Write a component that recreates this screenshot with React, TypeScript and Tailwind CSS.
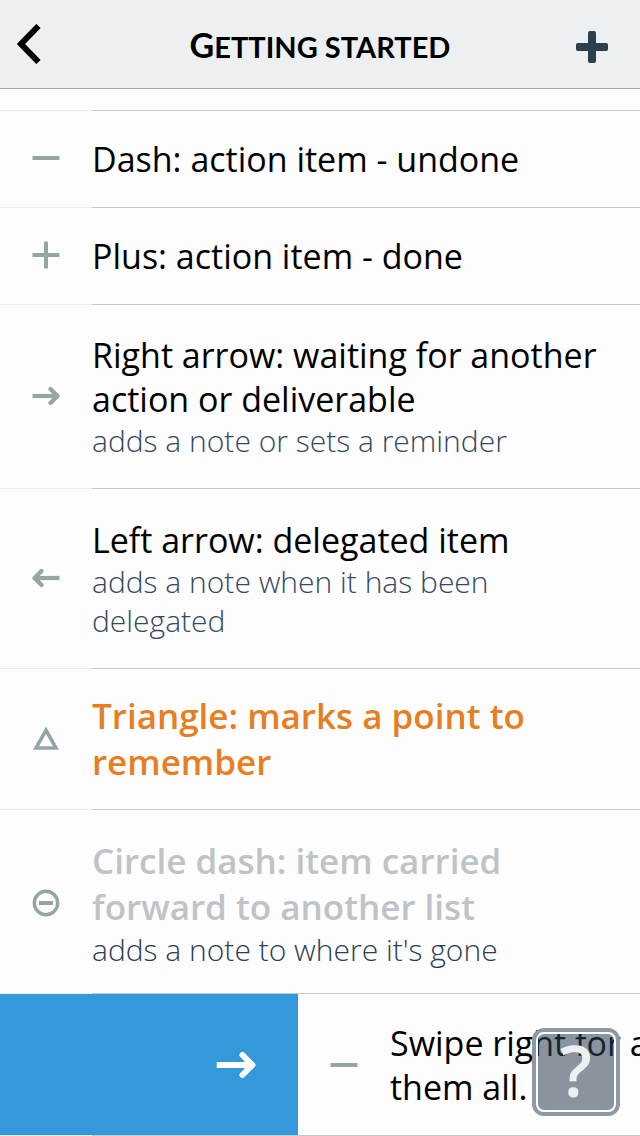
import type { ReactNode } from "react";
import clsx from "clsx";

type Item = {
  id: string;
  icon: ReactNode;
  title: string;
  note?: string;
  pad: string;
  titleClass?: string;
  noteClass?: string;
};

const items: Item[] = [
  { id: "dash", icon: <DashIcon />, title: "Dash: action item - undone", pad: "py-[26px]" },
  { id: "plus", icon: <PlusIcon />, title: "Plus: action item - done", pad: "py-[26px]" },
  {
    id: "right",
    icon: <ArrowIcon className="h-7 w-7" />,
    title: "Right arrow: waiting for another action or deliverable",
    note: "adds a note or sets a reminder",
    pad: "py-7",
  },
  {
    id: "left",
    icon: <ArrowIcon className="h-7 w-7 rotate-180" />,
    title: "Left arrow: delegated item",
    note: "adds a note when it has been delegated",
    pad: "pt-[29px] pb-7",
  },
  {
    id: "triangle",
    icon: <TriangleIcon />,
    title: "Triangle: marks a point to remember",
    pad: "py-6",
    titleClass: "text-[35px] font-semibold leading-[46px] text-[#e67e22]",
  },
  {
    id: "circle",
    icon: <CircleDashIcon />,
    title: "Circle dash: item carried forward to another list",
    note: "adds a note to where it's gone",
    pad: "pt-7 pb-6",
    titleClass: "text-[35px] font-semibold leading-[46px] text-[#bdc3c7]",
    noteClass: "text-[#2c3e50]",
  },
];

export default function App() {
  return (
    <div className="relative flex h-screen flex-col overflow-hidden bg-[#fdfdfd] font-['Open_Sans','Noto_Sans',sans-serif]">
      <header className="grid h-[89px] shrink-0 grid-cols-[92px_1fr_92px] items-center border-b border-[#a3a7a7] bg-[#ecf0f1]">
        <button type="button" aria-label="Back" className="flex h-full items-center pl-4">
          <svg viewBox="0 0 26 40" className="h-10 w-[26px]" fill="none" stroke="#000" strokeWidth="6">
            <path d="M22.5 2 L5 20 L22.5 38" />
          </svg>
        </button>
        <h1 className="text-center font-['Lato',sans-serif] text-[29px] font-bold uppercase first-letter:text-[34px]">
          Getting started
        </h1>
        <button type="button" aria-label="Add item" className="flex h-full items-center justify-end pt-1.5 pr-8">
          <svg viewBox="0 0 32 32" className="h-8 w-8" fill="#2c3e50">
            <rect x="0" y="12" width="32" height="8" rx="2" />
            <rect x="12" y="0" width="8" height="32" rx="2" />
          </svg>
        </button>
      </header>

      <main className="pt-[21px]">
        <Separator />
        <ul>
          {items.map((item) => (
            <li key={item.id}>
              <Row item={item} />
              <Separator />
            </li>
          ))}
          <li>
            {/* row pulled to the right, showing the "waiting" action */}
            <div className="flex overflow-hidden">
              <div className="flex w-[298px] shrink-0 items-center justify-end bg-[#3498db] pr-[42px] text-white">
                <ArrowIcon className="h-10 w-10" />
              </div>
              <div className="flex w-full shrink-0 items-center pt-[27px] pb-[26px]">
                <div className="flex w-[92px] shrink-0 justify-center text-[#95a5a6]">
                  <DashIcon />
                </div>
                <p className="text-[34px] leading-[44px] font-medium">
                  Swipe right for a
                  <br />
                  them all.
                </p>
              </div>
            </div>
            <Separator />
          </li>
        </ul>
      </main>

      <button
        type="button"
        aria-label="Help"
        className="absolute right-5 bottom-5 h-[88px] w-[88px] rounded-xl border-4 border-[#8f979f] bg-[#2c3e50]/55 bg-clip-padding"
      >
        <span className="flex h-full w-full items-center justify-center rounded-lg border-2 border-white pb-1 text-[70px] leading-none font-semibold text-[#ecf0f1]">
          ?
        </span>
      </button>
    </div>
  );
}

function Row({ item }: { item: Item }) {
  return (
    <div className={clsx("flex items-center", item.pad)}>
      <div className="flex w-[92px] shrink-0 justify-center pb-0.5 text-[#95a5a6]">{item.icon}</div>
      <div className="flex-1 pr-8">
        <h2 className={item.titleClass ?? "text-[34px] leading-[44px] font-medium text-black"}>{item.title}</h2>
        {item.note && (
          <p className={clsx("text-[30px] leading-[39px] font-light", item.noteClass ?? "text-[#34495e]")}>{item.note}</p>
        )}
      </div>
    </div>
  );
}

function Separator() {
  return (
    <div className="flex h-px">
      <div className="w-[92px] bg-[#ececec]" />
      <div className="flex-1 bg-[#c8c8c8]" />
    </div>
  );
}

function DashIcon() {
  return (
    <svg viewBox="0 0 28 28" className="h-7 w-7" fill="currentColor">
      <rect x="0.5" y="12" width="27" height="4" rx="0.6" />
    </svg>
  );
}

function PlusIcon() {
  return (
    <svg viewBox="0 0 28 28" className="h-7 w-7" fill="currentColor">
      <rect x="0.5" y="12" width="27" height="4" rx="0.6" />
      <rect x="12" y="0.5" width="4" height="27" rx="0.6" />
    </svg>
  );
}

function ArrowIcon({ className }: { className: string }) {
  return (
    <svg viewBox="0 0 28 28" className={className} fill="none" stroke="currentColor" strokeWidth="4.2">
      <path d="M0.5 14 H25" />
      <path d="M18.5 7 L25.5 14 L18.5 21" strokeLinecap="round" strokeLinejoin="round" />
      <path d="M20 10.5 L24 14 L20 17.5 Z" fill="currentColor" stroke="none" />
    </svg>
  );
}

function TriangleIcon() {
  return (
    <svg viewBox="0 0 28 28" className="h-7 w-7" fill="none" stroke="currentColor" strokeWidth="3.6">
      <path d="M14 6.2 L24 24 H4 Z" />
    </svg>
  );
}

function CircleDashIcon() {
  return (
    <svg viewBox="0 0 28 28" className="h-7 w-7" fill="none" stroke="currentColor">
      <circle cx="14" cy="14" r="11.7" strokeWidth="3.4" />
      <path d="M7 14 H21" strokeWidth="4" />
    </svg>
  );
}
